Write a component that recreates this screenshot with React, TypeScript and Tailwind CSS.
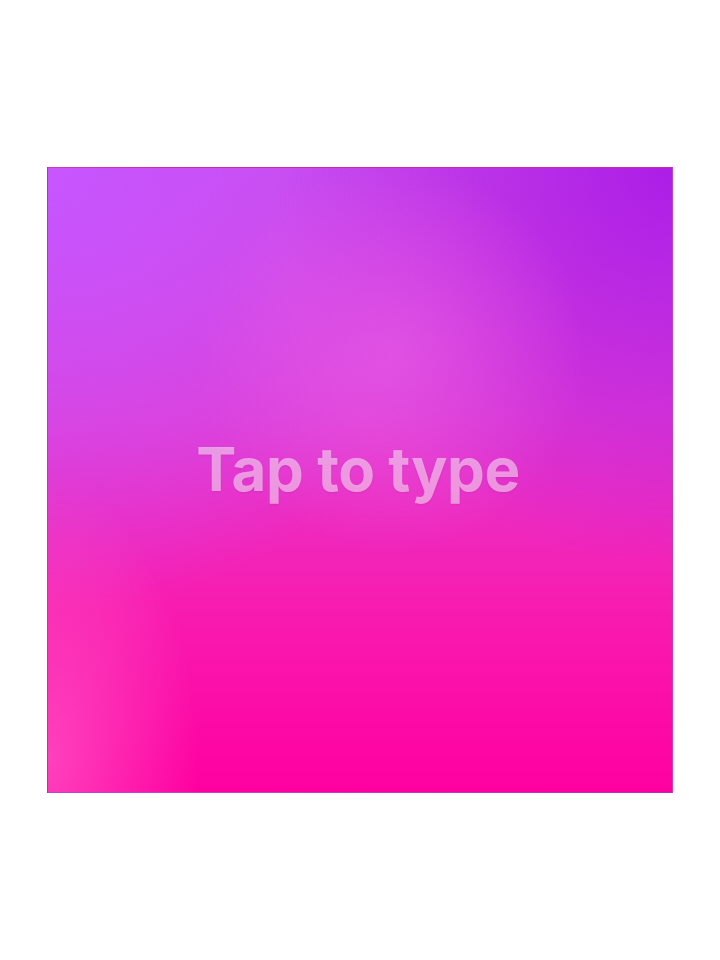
export default function App() {
  return (
    <div className="flex h-[960px] w-[720px] items-center justify-center bg-white">
      <div className="relative flex h-[626px] w-[626px] items-center justify-center border border-[#b03cb0]/60 pb-[22px] pr-[4px] bg-[radial-gradient(circle_at_55%_30%,rgba(230,90,230,0.7)_0%,rgba(230,90,230,0)_35%),radial-gradient(ellipse_24%_45%_at_0%_95%,rgba(255,90,200,0.7)_0%,rgba(255,90,200,0)_100%),radial-gradient(circle_at_100%_0%,rgba(170,25,230,0.9)_0%,rgba(170,25,230,0)_45%),radial-gradient(circle_at_0%_0%,rgba(200,85,255,1)_0%,rgba(200,85,255,0)_50%),linear-gradient(to_bottom,#c84ae8_0%,#e23ad0_40%,#f81cb0_70%,#ff00a0_100%)]">
        <span className="font-['Inter',sans-serif] text-[60px] font-bold tracking-[-0.4px] text-white/50 [text-shadow:0_1px_2px_rgba(150,0,120,0.15)]">
          Tap to type
        </span>
      </div>
    </div>
  );
}
